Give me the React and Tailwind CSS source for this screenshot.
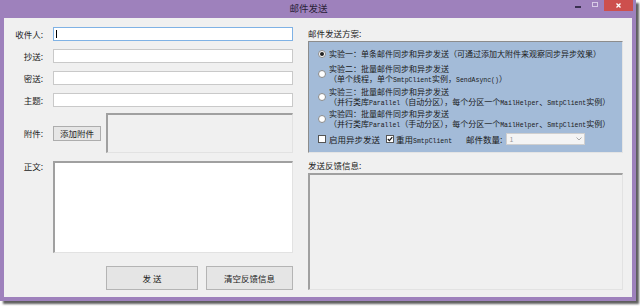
import React from "react";

const cjk = { fontFamily: '"Noto Sans CJK SC", "Noto Sans", sans-serif' };

function Mono({ children }) {
  return (
    <span className="text-[6.5px] leading-[6px]" style={{ fontFamily: '"Liberation Mono", monospace' }}>
      {children}
    </span>
  );
}

function Radio({ checked }) {
  return (
    <span className="w-[8px] h-[8px] rounded-full bg-white border border-[#8a8a8a] flex items-center justify-center shrink-0">
      {checked && <span className="w-[4px] h-[4px] rounded-full bg-[#222]" />}
    </span>
  );
}

function Check({ checked }) {
  return (
    <span className="w-[8px] h-[8px] bg-white border border-[#555] flex items-center justify-center shrink-0">
      {checked && (
        <svg width="6" height="6" viewBox="0 0 6 6">
          <path d="M0.8 3 L2.4 4.6 L5.3 1.2" stroke="#111" strokeWidth="1.2" fill="none" />
        </svg>
      )}
    </span>
  );
}

function Line({ children }) {
  return <div className="h-[10px] leading-[10px] whitespace-nowrap">{children}</div>;
}

function Row({ label, children, align = "items-center", className = "" }) {
  return (
    <div className={`flex ${align} ${className}`}>
      <div className="w-[39px] text-right text-[8.5px] leading-[10px] text-[#222] shrink-0">{label}</div>
      <div className="ml-[10px] w-[240px]">{children}</div>
    </div>
  );
}

const sunken =
  "border-t-2 border-l-2 border-[#a0a0a0] border-r border-b border-r-[#e2e2e2] border-b-[#e2e2e2]";

export default function App() {
  return (
    <div className="w-[640px] h-[306px] bg-white overflow-hidden" style={cjk}>
      <div className="w-[636px] h-[301px] bg-[#9e81bc] flex flex-col shadow-[3px_3px_2px_rgba(40,40,40,0.75)]">
        {/* title bar */}
        <div className="h-[18px] flex items-start shrink-0">
          <div className="flex-1 flex justify-center pl-[42px] pt-[3px]">
            <span className="text-[9.5px] leading-[11px] text-[#2a2238]">邮件发送</span>
          </div>
          <div className="flex items-start">
            <div className="w-[6px] h-[1.5px] bg-[#3a3050] mt-[6px] mr-[11px]" />
            <div className="w-[6px] h-[5px] border border-[#d8cce6] mt-[2px] mr-[6px]" />
            <div className="w-[29px] h-[11px] bg-[#cd4f4d] flex items-center justify-center mr-[3px]">
              <svg width="5" height="5" viewBox="0 0 5 5">
                <path d="M0.5 0.5 L4.5 4.5 M4.5 0.5 L0.5 4.5" stroke="#fff" strokeWidth="1.3" />
              </svg>
            </div>
          </div>
        </div>

        {/* content */}
        <div className="flex-1 mx-[4px] mb-[4px] bg-[#f0f0f0] flex">
          {/* left column */}
          <div className="flex flex-col pt-[9px] w-[289px] shrink-0">
            <Row label="收件人:">
              <div className="h-[14px] bg-white border border-[#7fb2e5] flex items-center pl-[2px]">
                <div className="w-[1px] h-[8px] bg-black" />
              </div>
            </Row>
            <Row label="抄送:" className="mt-[8px]">
              <div className="h-[14px] bg-white border border-[#c9c9c9]" />
            </Row>
            <Row label="密送:" className="mt-[8px]">
              <div className="h-[14px] bg-white border border-[#c9c9c9]" />
            </Row>
            <Row label="主题:" className="mt-[8px]">
              <div className="h-[14px] bg-white border border-[#c9c9c9]" />
            </Row>
            <Row label="附件:" className="mt-[6px]">
              <div className="flex items-center">
                <div className="w-[48px] h-[15px] bg-[#e6e6e6] border border-[#adadad] flex items-center justify-center text-[8.5px] leading-[10px] text-[#222]">
                  添加附件
                </div>
                <div className={`ml-[5px] w-[187px] h-[40px] bg-[#f0f0f0] ${sunken}`} />
              </div>
            </Row>
            <Row label="正文:" align="items-start" className="mt-[8px]">
              <div className={`h-[92px] bg-white ${sunken}`} />
            </Row>
            <div className="mt-[13px] flex justify-end gap-[8px]">
              <div className="w-[92px] h-[24px] bg-[#e5e5e5] border border-[#b4b4b4] flex items-center justify-center text-[8.5px] text-[#222]">
                发 送
              </div>
              <div className="w-[87px] h-[24px] bg-[#e5e5e5] border border-[#b4b4b4] flex items-center justify-center text-[8.5px] text-[#222]">
                清空反馈信息
              </div>
            </div>
          </div>

          {/* right column */}
          <div className="ml-[15px] w-[315px] flex flex-col pt-[10px]">
            <div className="h-[10px] text-[8.5px] leading-[10px] text-[#222]">邮件发送方案:</div>
            <div className="mt-[3px] h-[112px] bg-[#a3bbd8] border border-[#8c8c8c] border-b-[#e4e4e4] border-r-[#e4e4e4] flex flex-col pl-[9px] text-[8px] leading-[10px] text-[#1a1a1a]">
              <div className="mt-[7px] flex items-center">
                <Radio checked />
                <div className="ml-[3px]">
                  <Line>实验一：单条邮件同步和异步发送（可通过添加大附件来观察同步异步效果）</Line>
                </div>
              </div>
              <div className="mt-[5px] flex items-center">
                <Radio />
                <div className="ml-[3px] flex flex-col">
                  <Line>实验二：批量邮件同步和异步发送</Line>
                  <Line>（单个线程，单个<Mono>SmtpClient</Mono>实例，<Mono>SendAsync()</Mono>）</Line>
                </div>
              </div>
              <div className="mt-[3px] flex items-center">
                <Radio />
                <div className="ml-[3px] flex flex-col">
                  <Line>实验三：批量邮件同步和异步发送</Line>
                  <Line>（并行类库<Mono>Parallel</Mono>（自动分区），每个分区一个<Mono>MailHelper</Mono>、<Mono>SmtpClient</Mono>实例）</Line>
                </div>
              </div>
              <div className="mt-[2px] flex items-center">
                <Radio />
                <div className="ml-[3px] flex flex-col">
                  <Line>实验四：批量邮件同步和异步发送</Line>
                  <Line>（并行类库<Mono>Parallel</Mono>（手动分区），每个分区一个<Mono>MailHelper</Mono>、<Mono>SmtpClient</Mono>实例）</Line>
                </div>
              </div>
              <div className="mt-[4px] flex items-center h-[12px] leading-[10px]">
                <Check />
                <span className="ml-[3px] text-[8.5px]">启用异步发送</span>
                <span className="ml-[6px]"><Check checked /></span>
                <span className="ml-[2px] text-[8.5px]">重用<Mono>SmtpClient</Mono></span>
                <span className="ml-[14px] text-[8.5px]">邮件数量:</span>
                <div className="ml-[4px] w-[79px] h-[12px] bg-[#f4f4f4] border border-[#cfcfcf] flex items-center justify-between px-[2px]">
                  <span className="text-[7px] leading-[8px] text-[#9a9a9a]">1</span>
                  <svg width="6" height="4" viewBox="0 0 6 4">
                    <path d="M0.5 0.5 L3 3 L5.5 0.5" stroke="#a0a0a0" strokeWidth="0.9" fill="none" />
                  </svg>
                </div>
              </div>
            </div>
            <div className="mt-[7px] h-[10px] text-[8.5px] leading-[10px] text-[#222]">发送反馈信息:</div>
            <div className={`mt-[3px] h-[117px] bg-[#f0f0f0] ${sunken}`} />
          </div>
        </div>
      </div>
    </div>
  );
}
